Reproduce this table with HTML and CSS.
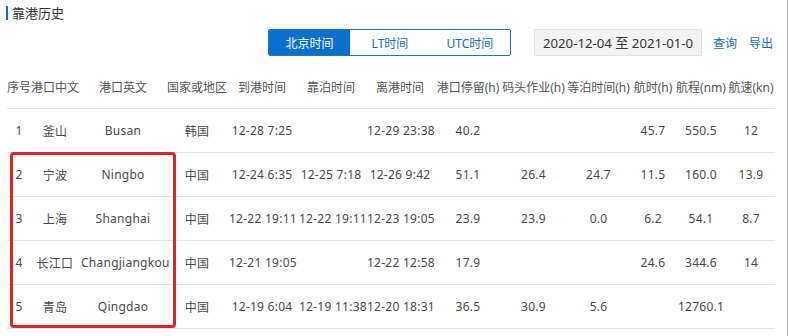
FILE: index.html
```html
<!DOCTYPE html>
<html lang="zh">
<head>
<meta charset="utf-8">
<title>靠港历史</title>
<link rel="stylesheet" href="styles.css">
</head>
<body>
<div class="page">
  <div class="title">靠港历史</div>
  <div class="toolbar">
    <div class="seg">
      <span class="seg-item active">北京时间</span>
      <span class="seg-item">LT时间</span>
      <span class="seg-item">UTC时间</span>
    </div>
    <div class="date"><span class="date-text">2020-12-04 至 2021-01-02</span></div>
    <a class="link">查询</a>
    <a class="link">导出</a>
  </div>
  <div class="table-wrap">
    <table class="grid">
      <colgroup>
        <col class="w24"><col class="w48"><col class="w88"><col class="w60"><col class="w70"><col class="w68"><col class="w70"><col class="w66"><col class="w65"><col class="w65"><col class="w44"><col class="w52"><col class="w48">
      </colgroup>
      <thead>
        <tr><th>序号</th><th>港口中文</th><th>港口英文</th><th>国家或地区</th><th>到港时间</th><th>靠泊时间</th><th>离港时间</th><th>港口停留(h)</th><th>码头作业(h)</th><th>等泊时间(h)</th><th>航时(h)</th><th>航程(nm)</th><th>航速(kn)</th></tr>
      </thead>
      <tbody>
        <tr><td>1</td><td>釜山</td><td>Busan</td><td>韩国</td><td>12-28 7:25</td><td></td><td>12-29 23:38</td><td>40.2</td><td></td><td></td><td>45.7</td><td>550.5</td><td>12</td></tr>
        <tr><td>2</td><td>宁波</td><td>Ningbo</td><td>中国</td><td>12-24 6:35</td><td>12-25 7:18</td><td>12-26 9:42</td><td>51.1</td><td>26.4</td><td>24.7</td><td>11.5</td><td>160.0</td><td>13.9</td></tr>
        <tr><td>3</td><td>上海</td><td>Shanghai</td><td>中国</td><td>12-22 19:11</td><td>12-22 19:11</td><td>12-23 19:05</td><td>23.9</td><td>23.9</td><td>0.0</td><td>6.2</td><td>54.1</td><td>8.7</td></tr>
        <tr><td>4</td><td>长江口</td><td>Changjiangkou</td><td>中国</td><td>12-21 19:05</td><td></td><td>12-22 12:58</td><td>17.9</td><td></td><td></td><td>24.6</td><td>344.6</td><td>14</td></tr>
        <tr><td>5</td><td>青岛</td><td>Qingdao</td><td>中国</td><td>12-19 6:04</td><td>12-19 11:38</td><td>12-20 18:31</td><td>36.5</td><td>30.9</td><td>5.6</td><td></td><td>12760.1</td><td></td></tr>
      </tbody>
    </table>
    <div class="mark"></div>
  </div>
</div>
</body>
</html>
```
FILE: styles.css
```css
* { box-sizing: border-box; }
html, body { margin: 0; padding: 0; background: #fff; }
body {
  font-family: "Noto Sans", "Noto Sans CJK SC", sans-serif;
  color: #444;
  font-size: 12px;
}
.page {
  width: 788px;
  height: 336px;
  overflow: hidden;
  border-right: 1px solid #c8c8c8;
}
.title {
  margin: 6px 0 0 6px;
  height: 14px;
  line-height: 14px;
  padding-left: 4px;
  border-left: 2px solid #1f6fb8;
  font-size: 13px;
  color: #333;
}
.toolbar {
  margin-top: 9px;
  display: flex;
  align-items: center;
  justify-content: flex-end;
  padding-right: 14px;
  height: 27px;
}
.seg {
  display: flex;
  height: 27px;
  border: 1px solid #2a72b5;
  border-radius: 2px;
  overflow: hidden;
}
.seg-item {
  width: 80px;
  display: flex;
  align-items: center;
  justify-content: center;
  color: #1a6cc0;
  font-size: 12px;
}
.seg-item.active {
  background: #0a6fcd;
  color: #fff;
  width: 81px;
}
.date {
  margin-left: 23px;
  width: 168px;
  height: 27px;
  background: #f3f3f3;
  border: 1px solid #e2e2e2;
  padding: 0 8px;
  display: flex;
  align-items: center;
}
.date-text {
  flex: 1;
  overflow: hidden;
  white-space: nowrap;
  font-size: 13.2px;
  color: #333;
}
.link {
  color: #1a6cc0;
  font-size: 12px;
  margin-left: 12px;
}
.date + .link { margin-left: 11px; }
.table-wrap {
  position: relative;
  margin: 9px 0 0 7px;
  width: 768px;
}
.grid {
  width: 768px;
  table-layout: fixed;
  border-collapse: separate;
  border-spacing: 0;
}
.grid th, .grid td {
  padding: 0 2px;
  height: 44px;
  border-bottom: 1px solid #e4e4e4;
  text-align: center;
  white-space: nowrap;
  font-weight: normal;
  vertical-align: middle;
}
.grid th { color: #555; padding: 0; }
.grid td { color: #4a4a4a; letter-spacing: 0.25px; }
.w24 { width: 24px; }
.w48 { width: 48px; }
.w88 { width: 88px; }
.w60 { width: 60px; }
.w70 { width: 70px; }
.w68 { width: 68px; }
.w66 { width: 66px; }
.w65 { width: 65px; }
.w44 { width: 44px; }
.w52 { width: 52px; }
.mark {
  position: absolute;
  left: 3px;
  top: 87px;
  width: 166px;
  height: 176px;
  border: 3px solid #d9262c;
  border-radius: 4px;
}
```
